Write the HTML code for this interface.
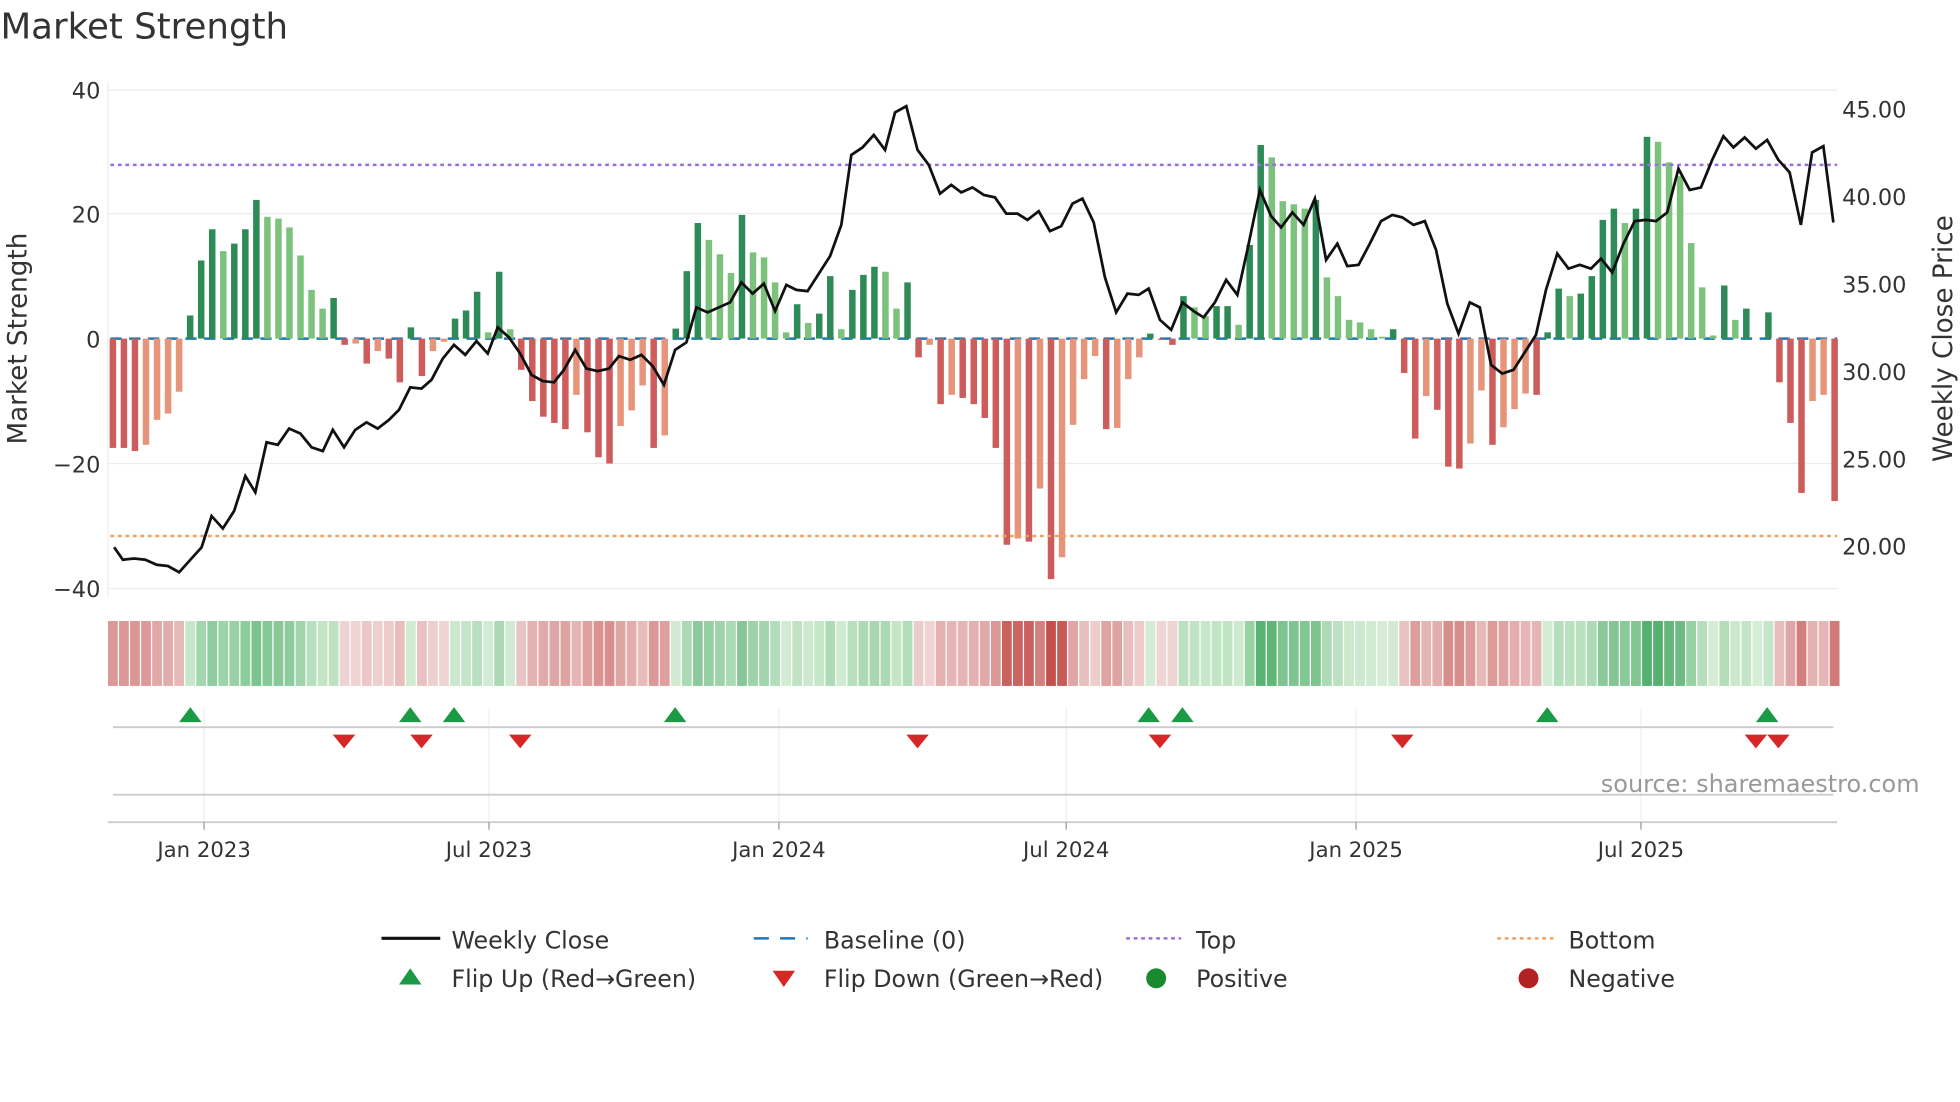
<!DOCTYPE html>
<html><head><meta charset="utf-8"><style>
html,body{margin:0;padding:0;background:#fff;}
svg{display:block;font-family:"DejaVu Sans","Liberation Sans",sans-serif;}
</style></head><body>
<svg id="s" width="1960" height="1102" viewBox="0 0 1568 882" xmlns="http://www.w3.org/2000/svg">
<rect width="1568" height="882" fill="#fff"/>
<text x="0" y="31" font-size="28.5" fill="#333">Market Strength</text>
<g stroke="#ececec" stroke-width="1">
<line x1="86" y1="72" x2="1470" y2="72"/><line x1="86" y1="171" x2="1470" y2="171"/>
<line x1="86" y1="371" x2="1470" y2="371"/><line x1="86" y1="471" x2="1470" y2="471"/>
<line x1="86" y1="65" x2="86" y2="478"/>
</g>
<g font-size="18" fill="#333" text-anchor="end">
<text x="80" y="79">40</text><text x="80" y="278">0</text><text x="80" y="178">20</text>
<text x="80" y="378">−20</text><text x="80" y="478">−40</text>
</g>
<g font-size="18" fill="#333">
<text x="1474" y="94">45.00</text><text x="1474" y="164">40.00</text><text x="1474" y="234">35.00</text>
<text x="1474" y="304">30.00</text><text x="1474" y="374">25.00</text><text x="1474" y="444">20.00</text>
</g>
<text transform="translate(21,271) rotate(-90)" font-size="21" fill="#333" text-anchor="middle">Market Strength</text>
<text transform="translate(1562,271) rotate(-90)" font-size="21" fill="#333" text-anchor="middle">Weekly Close Price</text>
<line x1="88" y1="271" x2="1470" y2="271" stroke="#1f77b4" stroke-width="2" stroke-dasharray="9,6"/>
<g id="bars"></g>
<line x1="88" y1="132" x2="1470" y2="132" stroke="#9b6ee0" stroke-width="2" stroke-dasharray="3,3"/>
<line x1="88" y1="429" x2="1470" y2="429" stroke="#f0a060" stroke-width="2" stroke-dasharray="3,3"/>
<polyline id="price" fill="none" stroke="#111" stroke-width="2.2" points=""/>
<g id="heat"></g>
<g stroke="#eee"><line x1="163" y1="567" x2="163" y2="658"/><line x1="391" y1="567" x2="391" y2="658"/><line x1="623" y1="567" x2="623" y2="658"/><line x1="853" y1="567" x2="853" y2="658"/><line x1="1085" y1="567" x2="1085" y2="658"/><line x1="1313" y1="567" x2="1313" y2="658"/></g>
<line x1="90" y1="582" x2="1467" y2="582" stroke="#ccc" stroke-width="1.5"/>
<line x1="90" y1="636" x2="1467" y2="636" stroke="#ccc" stroke-width="1.5"/>
<line x1="86" y1="658" x2="1470" y2="658" stroke="#ccc" stroke-width="1.5"/>
<g id="marks"></g>
<g stroke="#999"><line x1="163" y1="658" x2="163" y2="664"/><line x1="391" y1="658" x2="391" y2="664"/><line x1="623" y1="658" x2="623" y2="664"/><line x1="853" y1="658" x2="853" y2="664"/><line x1="1085" y1="658" x2="1085" y2="664"/><line x1="1313" y1="658" x2="1313" y2="664"/></g>
<g font-size="17" fill="#333" text-anchor="middle">
<text x="163" y="686">Jan 2023</text><text x="391" y="686">Jul 2023</text><text x="623" y="686">Jan 2024</text>
<text x="853" y="686">Jul 2024</text><text x="1085" y="686">Jan 2025</text><text x="1313" y="686">Jul 2025</text>
</g>
<text x="1536" y="634" font-size="19.2" fill="#999" text-anchor="end">source: sharemaestro.com</text>
<g font-size="19" fill="#333">
<line x1="305" y1="751" x2="352" y2="751" stroke="#111" stroke-width="2.5"/><text x="361" y="759">Weekly Close</text>
<line x1="603" y1="751" x2="646" y2="751" stroke="#1f77b4" stroke-width="2" stroke-dasharray="12,9"/><text x="659" y="759">Baseline (0)</text>
<line x1="901" y1="751" x2="945" y2="751" stroke="#9b6ee0" stroke-width="2" stroke-dasharray="3,3"/><text x="957" y="759">Top</text>
<line x1="1198" y1="751" x2="1243" y2="751" stroke="#f0a060" stroke-width="2" stroke-dasharray="3,3"/><text x="1255" y="759">Bottom</text>
<polygon points="319,788 328,775 337,788" fill="#1a9a44"/><text x="361" y="790">Flip Up (Red→Green)</text>
<polygon points="618,777 636,777 627,790" fill="#d62728"/><text x="659" y="790">Flip Down (Green→Red)</text>
<circle cx="925" cy="783" r="8" fill="#1a8a30"/><text x="957" y="790">Positive</text>
<circle cx="1223" cy="783" r="8" fill="#b22222"/><text x="1255" y="790">Negative</text>
</g>
</svg>
<script>
var v=[-17.5,-17.5,-18,-17,-13,-12,-8.5,3.7,12.5,17.5,14,15.2,17.5,22.2,19.5,19.2,17.8,13.3,7.8,4.8,6.5,-1,-0.8,-4,-2,-3.2,-7,1.8,-6,-2,-0.5,3.2,4.5,7.5,1,10.7,1.5,-5,-10,-12.5,-13.5,-14.5,-9,-15,-19,-20,-14,-11.5,-7.5,-17.5,-15.5,1.6,10.8,18.5,15.8,13.5,10.5,19.8,13.8,13,9,1,5.5,2.5,4,10,1.5,7.8,10.2,11.5,10.7,4.8,9,-3,-1,-10.5,-9,-9.5,-10.5,-12.7,-17.5,-33,-32,-32.5,-24,-38.5,-35,-13.8,-6.5,-2.8,-14.5,-14.3,-6.5,-3,0.8,-0.2,-1,6.8,5,3.6,5.2,5.2,2.2,15,31,29,22,21.5,20.8,22.2,9.8,6.8,3,2.6,1.5,0.3,1.5,-5.5,-16,-9.2,-11.4,-20.5,-20.8,-16.8,-8.3,-17,-14.2,-11.3,-8.8,-9,1,8,6.8,7.2,10,19,20.8,18.5,20.8,32.3,31.5,28.2,26,15.3,8.2,0.5,8.5,3,4.8,0,4.2,-7,-13.5,-24.7,-10,-9,-26];
var n=v.length,x0=90,dx=(1468-90)/(n-1),ns="http://www.w3.org/2000/svg";
function R(g,x,y,w,h,f){var r=document.createElementNS(ns,"rect");r.setAttribute("x",x);r.setAttribute("y",y);r.setAttribute("width",w);r.setAttribute("height",h);r.setAttribute("fill",f);g.appendChild(r);}
function mix(a,b,t){return "rgb("+a.map(function(c,i){return Math.round(c+(b[i]-c)*t)}).join(",")+")";}
var bars=document.getElementById("bars"),heat=document.getElementById("heat");
for(var i=0;i<n;i++){var x=x0+i*dx,val=v[i],p=i?v[i-1]:0,dark=Math.abs(val)>=Math.abs(p)||(val*p<0);
var f=val>=0?(dark?"#2e8b57":"#7cc27c"):(dark?"#cd5c5c":"#e6957a");
var h=Math.abs(val)*5;R(bars,x-2.6,val>=0?271-h:271,5.2,h,f);
var t=Math.min(1,Math.abs(val)/38);
var c=val>=0?mix([214,238,214],[60,165,90],t):mix([240,214,214],[195,80,75],t);
R(heat,x-dx/2+0.5,497,dx-1,52,c);}
var pts=[[91,438],[98,448],[107,447],[116,448],[125,452],[134,453],[143,458],[152,448],[161,438],[169,413],[178,423],[187,409],[196,381],[204,394],[213,354],[222,356],[231,343],[240,347],[249,358],[258,361],[266,344],[275,358],[284,344],[293,338],[302,343],[311,336],[319,328],[328,310],[337,311],[345,304],[354,287],[363,276],[372,284],[381,273],[390,283],[398,262],[407,270],[416,283],[425,300],[434,305],[443,306],[451,296],[460,280],[469,295],[478,297],[487,295],[495,285],[504,288],[513,284],[522,293],[531,308],[540,280],[549,274],[557,246],[566,250],[575,246],[584,242],[593,226],[602,235],[611,227],[620,249],[629,228],[637,232],[646,233],[655,219],[664,205],[673,180],[681,124],[690,118],[699,108],[708,120],[716,90],[725,85],[734,120],[743,132],[752,155],[761,148],[769,154],[778,150],[787,156],[796,158],[805,171],[814,171],[822,176],[831,169],[840,185],[849,181],[858,163],[866,159],[875,178],[884,222],[893,250],[902,235],[911,236],[919,231],[928,256],[937,264],[946,242],[955,249],[963,254],[972,242],[981,224],[990,236],[998,200],[1008,152],[1017,173],[1025,182],[1034,170],[1043,180],[1052,159],[1061,208],[1070,195],[1078,213],[1087,212],[1096,195],[1105,177],[1114,172],[1122,174],[1131,180],[1140,177],[1149,200],[1158,243],[1167,267],[1176,242],[1184,246],[1193,292],[1202,299],[1211,296],[1220,282],[1229,268],[1237,232],[1246,203],[1255,215],[1264,212],[1273,215],[1281,207],[1290,218],[1299,195],[1308,177],[1317,176],[1325,177],[1334,170],[1343,135],[1352,152],[1361,150],[1370,128],[1379,109],[1387,118],[1396,110],[1405,119],[1414,112],[1423,128],[1432,138],[1441,180],[1450,122],[1459,117],[1467,178]];
document.getElementById("price").setAttribute("points",pts.map(function(p){return p.join(",")}).join(" "));
var m=document.getElementById("marks"),s="";
[152,328,363,540,919,946,1238,1414].forEach(function(x){s+='<polygon points="'+(x-9)+',578 '+x+',566 '+(x+9)+',578" fill="#1a9a44"/>';});
[275,337,416,734,928,1122,1405,1423].forEach(function(x){s+='<polygon points="'+(x-9)+',588 '+(x+9)+',588 '+x+',599" fill="#d62728"/>';});
m.innerHTML=s;
</script>
</body></html>
